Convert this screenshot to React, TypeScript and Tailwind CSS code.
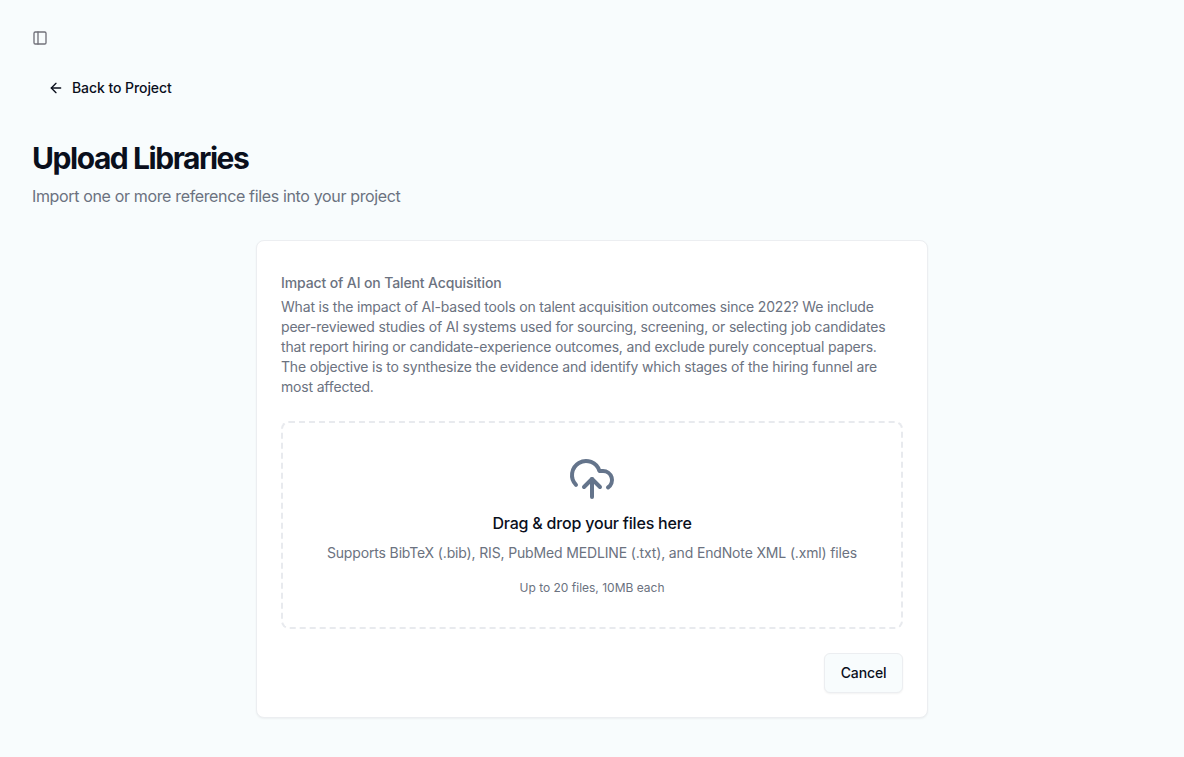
import { ArrowLeft, PanelLeft } from 'lucide-react';

export default function App() {
  return (
    <div className="min-h-screen bg-[#f8fcfd] px-8 pt-[30px] font-['Inter',sans-serif] text-[#0a0f1c]">
      <button className="block text-[#71717a]">
        <PanelLeft size={16} strokeWidth={2} />
      </button>

      <button className="mt-[24px] flex h-9 items-center gap-2 px-[16px] text-sm font-medium tracking-[-0.07px] text-[#0a0f1c]">
        <ArrowLeft size={16} />
        Back to Project
      </button>

      <h1 className="mt-[34px] text-[30px] leading-9 font-bold tracking-[-1.45px] text-[#0a0f1c]">
        Upload Libraries
      </h1>
      <p className="mt-[8px] text-base leading-6 tracking-[-0.35px] text-[#6b7280]">
        Import one or more reference files into your project
      </p>

      <div className="mx-auto mt-[32px] w-[672px] rounded-lg border border-[#eceef1] bg-white p-6 shadow-xs">
        <div className="pt-[8px]">
          <h2 className="text-sm leading-5 font-medium tracking-[-0.12px] text-[#6b7280]">
            Impact of AI on Talent Acquisition
          </h2>
          <p className="mt-1 text-sm leading-5 tracking-[-0.18px] text-[#6b7280]">
            What is the impact of AI-based tools on talent acquisition outcomes since 2022? We include peer-reviewed
            studies of AI systems used for sourcing, screening, or selecting job candidates that report hiring or
            candidate-experience outcomes, and exclude purely conceptual papers. The objective is to synthesize the
            evidence and identify which stages of the hiring funnel are most affected.
          </p>
        </div>

        <div className="mt-6 flex h-[208px] flex-col items-center rounded-lg border-2 border-dashed border-[#e8eaee] pt-[32px]">
          <svg
            width="48"
            height="48"
            viewBox="0 0 24 24"
            fill="none"
            stroke="#64748b"
            strokeWidth="2"
            strokeLinecap="round"
            strokeLinejoin="round"
          >
            <path d="M4 14.899A7 7 0 1 1 15.71 8h1.79a4.5 4.5 0 0 1 2.5 8.242" />
            <path d="M12 12v9" />
            <path d="m16 16-4-4-4 4" />
          </svg>
          <p className="mt-[8px] text-base leading-6 font-medium tracking-[-0.2px] text-[#0a0f1c]">
            Drag &amp; drop your files here
          </p>
          <p className="mt-[8px] text-sm leading-5 tracking-[-0.15px] text-[#6b7280]">
            Supports BibTeX (.bib), RIS, PubMed MEDLINE (.txt), and EndNote XML (.xml) files
          </p>
          <p className="mt-[17px] text-xs leading-4 text-[#6b7280]">Up to 20 files, 10MB each</p>
        </div>

        <div className="mt-6 flex justify-end">
          <button className="h-10 rounded-md border border-[#eceef1] bg-[#f8fcfd] px-[15.5px] text-sm font-medium tracking-[-0.1px] text-[#0a0f1c] shadow-xs">
            Cancel
          </button>
        </div>
      </div>
    </div>
  );
}
